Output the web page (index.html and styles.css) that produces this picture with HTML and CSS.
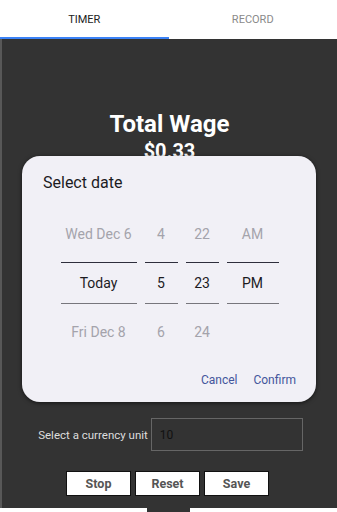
FILE: index.html
```html
<!DOCTYPE html>
<html lang="en">
<head>
    <meta charset="UTF-8">
    <meta name="viewport" content="width=device-width, initial-scale=1.0">
    <title>Wage Timer</title>
    <link rel="stylesheet" href="styles.css">
</head>
<body>
    <div class="app">
        <div class="tabs">
            <div class="tab active">Timer</div>
            <div class="tab">Record</div>
        </div>

        <div class="main">
            <div class="wage">
                <div class="wage-title">Total Wage</div>
                <div class="wage-value">$0.33</div>
            </div>

            <div class="currency-row">
                <label for="currency">Select a currency unit</label>
                <input type="text" id="currency" value="10">
            </div>

            <div class="buttons">
                <button>Stop</button>
                <button>Reset</button>
                <button>Save</button>
            </div>

            <!-- date picker modal -->
            <div class="modal">
                <div class="modal-title">Select date</div>
                <div class="picker">
                    <div class="wheel wheel-date">
                        <div class="wheel-item">Wed Dec 6</div>
                        <div class="wheel-item selected">Today</div>
                        <div class="wheel-item">Fri Dec 8</div>
                    </div>
                    <div class="wheel wheel-num">
                        <div class="wheel-item">4</div>
                        <div class="wheel-item selected">5</div>
                        <div class="wheel-item">6</div>
                    </div>
                    <div class="wheel wheel-num">
                        <div class="wheel-item">22</div>
                        <div class="wheel-item selected">23</div>
                        <div class="wheel-item">24</div>
                    </div>
                    <div class="wheel wheel-ampm">
                        <div class="wheel-item">AM</div>
                        <div class="wheel-item selected">PM</div>
                        <div class="wheel-item"></div>
                    </div>
                </div>
                <div class="modal-actions">
                    <span class="action">Cancel</span>
                    <span class="action">Confirm</span>
                </div>
            </div>
        </div>

        <div class="navbar">
            <div class="nav-handle"></div>
        </div>
    </div>
</body>
</html>
```

FILE: styles.css
```css
html, body {
    margin: 0;
    padding: 0;
    background-color: #ffffff;
    font-family: Roboto, "Noto Sans", Arial, sans-serif;
}

.app {
    width: 337px;
    height: 512px;
    display: flex;
    flex-direction: column;
    overflow: hidden;
}

.tabs {
    display: flex;
    height: 39px;
    background-color: #ffffff;
}

.tab {
    flex: 1;
    display: flex;
    align-items: center;
    justify-content: center;
    font-size: 11px;
    text-transform: uppercase;
    color: #8a8a8a;
    border-bottom: 2px solid transparent;
    box-sizing: border-box;
    padding-top: 1px;
}

.tab.active {
    color: #222222;
    border-bottom-color: #3b82f6;
}

.main {
    position: relative;
    height: 469px;
    background-color: #333333;
    border-left: 2px solid #585858;
    box-sizing: border-box;
    display: flex;
    flex-direction: column;
    align-items: center;
}

.wage {
    margin-top: 71px;
    text-align: center;
    color: #ffffff;
    font-weight: bold;
}

.wage-title {
    font-size: 24px;
    line-height: 28px;
}

.wage-value {
    font-size: 20px;
    line-height: 24px;
    margin-top: 1px;
}

.currency-row {
    margin-top: 255px;
    display: flex;
    align-items: center;
    gap: 3px;
    margin-left: 2px;
}

.currency-row label {
    color: #dddddd;
    font-size: 11.5px;
}

.currency-row input {
    width: 152px;
    height: 33px;
    box-sizing: border-box;
    background-color: #333333;
    border: 1px solid #666666;
    color: #111111;
    font-family: Roboto, Arial, sans-serif;
    font-size: 12px;
    padding: 0 8px;
    outline: none;
}

.buttons {
    margin-top: 20px;
    display: flex;
    gap: 4px;
    margin-left: -4px;
}

.buttons button {
    width: 65px;
    height: 25px;
    background-color: #ffffff;
    border: 1px solid #111111;
    color: #555555;
    font-family: Roboto, Arial, sans-serif;
    font-weight: bold;
    font-size: 12.5px;
    padding: 0;
}

/* modal sits on top of the timer screen */
.modal {
    position: absolute;
    left: 20px;
    top: 117px;
    width: 294px;
    height: 246px;
    box-sizing: border-box;
    background-color: #f1f0f6;
    border-radius: 18px;
    box-shadow: 0 1px 4px rgba(0, 0, 0, 0.6);
    padding: 17px 20px 12px 21px;
    display: flex;
    flex-direction: column;
}

.modal-title {
    font-size: 16px;
    line-height: 20px;
    color: #1c1b1f;
}

.picker {
    margin-top: 17px;
    display: flex;
    justify-content: center;
    gap: 8px;
}

.wheel {
    display: flex;
    flex-direction: column;
}

.wheel-date { width: 76px; }
.wheel-num { width: 33px; }
.wheel-ampm { width: 52px; }

.wheel-item {
    height: 48px;
    line-height: 48px;
    text-align: center;
    font-size: 14px;
    color: #a4a3ab;
    white-space: nowrap;
}

.wheel-item.selected {
    height: 40px;
    line-height: 40px;
    margin: 4px 0;
    color: #1c1b1f;
    border-top: 1px solid #2e2e3c;
    border-bottom: 1px solid #77767c;
}

.modal-actions {
    margin-top: 14px;
    display: flex;
    justify-content: flex-end;
    gap: 16px;
    font-size: 12px;
    line-height: 20px;
}

.action {
    color: #44569c;
}

.navbar {
    height: 4px;
    background-color: #ffffff;
    position: relative;
}

.nav-handle {
    margin-left: 147px;
    width: 43px;
    height: 4px;
    background-color: #333333;
}
```
